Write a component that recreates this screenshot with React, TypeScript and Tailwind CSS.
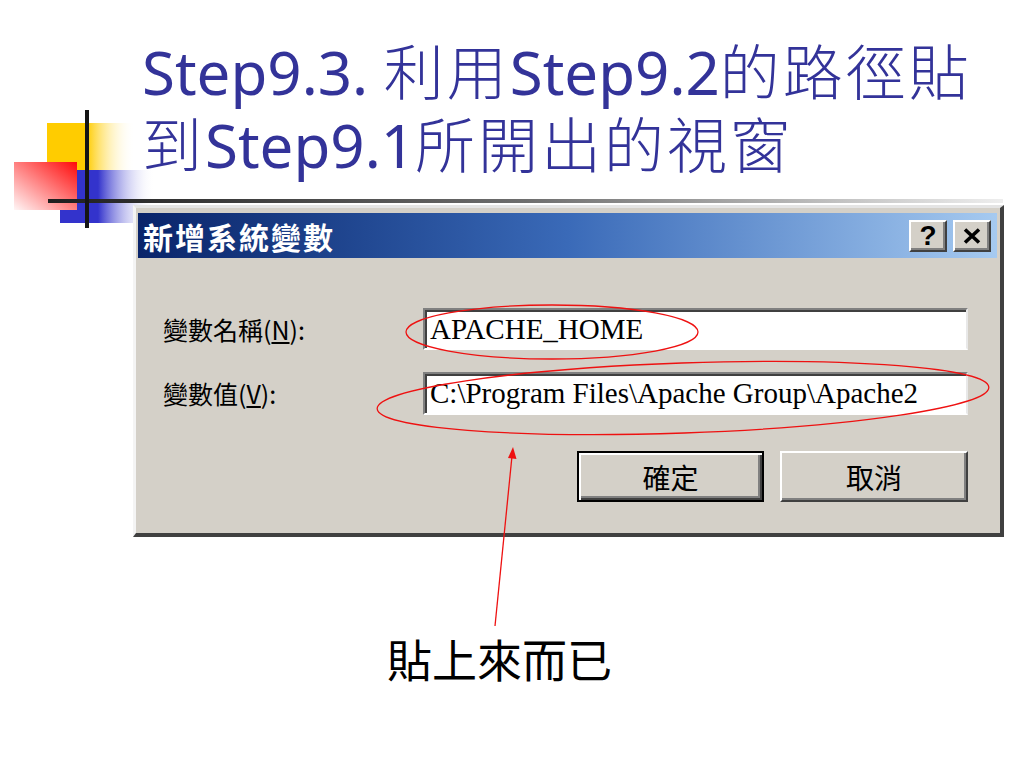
export default function App() {
  const cjk = '"Noto Sans CJK TC", "Noto Sans CJK SC", sans-serif';
  return (
    <div className="relative w-[1024px] h-[768px] overflow-hidden bg-white">
      {/* template logo decoration */}
      <svg
        className="absolute left-0 top-[100px]"
        width="1010"
        height="135"
        viewBox="0 100 1010 135"
      >
        <defs>
          <linearGradient id="yel" x1="0" y1="0" x2="1" y2="0">
            <stop offset="0" stopColor="#ffcc00" />
            <stop offset="0.45" stopColor="#ffcc00" />
            <stop offset="1" stopColor="#ffffff" stopOpacity="0" />
          </linearGradient>
          <linearGradient id="blu" x1="0" y1="0" x2="1" y2="0">
            <stop offset="0" stopColor="#3333cc" />
            <stop offset="0.4" stopColor="#3333cc" />
            <stop offset="1" stopColor="#ffffff" stopOpacity="0" />
          </linearGradient>
          <linearGradient id="red" x1="1" y1="0" x2="0" y2="1">
            <stop offset="0" stopColor="#ff0a0a" />
            <stop offset="0.5" stopColor="#ff8080" />
            <stop offset="1" stopColor="#fff6f6" />
          </linearGradient>
          <linearGradient id="gry" x1="0" y1="0" x2="1" y2="0">
            <stop offset="0" stopColor="#1e1e1e" />
            <stop offset="0.5" stopColor="#6e6e6e" />
            <stop offset="1" stopColor="#eeeeee" />
          </linearGradient>
        </defs>
        <rect x="47" y="123" width="88" height="47" fill="url(#yel)" />
        <rect x="60" y="170" width="95" height="53" fill="url(#blu)" />
        <rect x="14" y="162" width="63" height="48" fill="url(#red)" />
        <rect x="48" y="199" width="955" height="4" fill="url(#gry)" />
        <rect x="85" y="110" width="4" height="118" fill="#151515" />
      </svg>

      {/* slide title */}
      <div
        className="relative pt-[36px] pl-[142px] text-[60px] leading-[73px] text-[#333399] whitespace-nowrap"
        style={{ fontFamily: '"Noto Sans", "Noto Sans CJK TC", sans-serif' }}
      >
        Step9.3.&nbsp;<span className="tracking-[3px] font-light">利用</span>Step9.2
        <span className="tracking-[3px] font-light">的路徑貼</span>
        <br />
        <span className="tracking-[3px] font-light">到</span>Step9.1
        <span className="tracking-[3px] font-light">所開出的視窗</span>
      </div>

      {/* dialog screenshot */}
      <div className="relative mt-[23px] ml-[133px] w-[871px] h-[332px] flex flex-col bg-[#d4d0c8] border-t-[3px] border-l-[3px] border-r-[4px] border-b-[4px] border-t-[#e4e4e4] border-l-[#f4f4f4] border-r-[#404040] border-b-[#404040] pt-[5px] pl-[2px] pr-[3px]">
        {/* title bar */}
        <div className="h-[45px] flex items-center justify-between bg-linear-to-r from-[#0a246a] via-[#3a6ab8] to-[#a6caf0] pl-[5px] pr-[6px]">
          <span
            className="text-white text-[30px] font-bold tracking-[2px] leading-none"
            style={{ fontFamily: cjk }}
          >
            新增系統變數
          </span>
          <div className="flex gap-[6px]">
            <div
              className="w-[38px] h-[32px] flex items-center justify-center bg-[#d4d0c8] border-2 border-t-white border-l-white border-r-[#404040] border-b-[#404040] shadow-[inset_-2px_-2px_0_#808080] text-[28px] font-bold text-black leading-none"
              style={{ fontFamily: '"Liberation Sans", sans-serif' }}
            >
              ?
            </div>
            <div className="w-[38px] h-[32px] flex items-center justify-center bg-[#d4d0c8] border-2 border-t-white border-l-white border-r-[#404040] border-b-[#404040] shadow-[inset_-2px_-2px_0_#808080]">
              <svg width="18" height="16" viewBox="0 0 18 16">
                <path d="M2 1.5 L16 14.5 M16 1.5 L2 14.5" stroke="#000" strokeWidth="3.6" />
              </svg>
            </div>
          </div>
        </div>

        {/* body */}
        <div className="flex-1 flex flex-col pt-[50px] pl-[25px] pr-[29px]">
          <div className="flex items-center">
            <div className="w-[260px] text-[25px] text-black leading-none" style={{ fontFamily: cjk }}>
              變數名稱(<span className="underline">N</span>):
            </div>
            <div
              className="w-[545px] h-[42px] flex items-center bg-white border-2 border-t-[#808080] border-l-[#808080] border-b-white border-r-[#e8e8e8] shadow-[inset_2px_2px_0_#404040] pl-[5px] text-[29px] text-black leading-none"
              style={{ fontFamily: '"Liberation Serif", serif' }}
            >
              APACHE_HOME
            </div>
          </div>
          <div className="flex items-center mt-[22px]">
            <div className="w-[260px] text-[25px] text-black leading-none" style={{ fontFamily: cjk }}>
              變數值(<span className="underline">V</span>):
            </div>
            <div
              className="w-[545px] h-[43px] flex items-center bg-white border-2 border-t-[#808080] border-l-[#808080] border-b-white border-r-[#e8e8e8] shadow-[inset_2px_2px_0_#404040] pl-[5px] text-[29px] text-black leading-none whitespace-nowrap"
              style={{ fontFamily: '"Liberation Serif", serif' }}
            >
              C:\Program Files\Apache Group\Apache2
            </div>
          </div>
          <div className="flex justify-end gap-[16px] mt-[36px]">
            <div
              className="w-[187px] h-[51px] flex items-center justify-center border-2 border-black shadow-[inset_2px_2px_0_#ffffff,inset_-2px_-2px_0_#404040,inset_-4px_-4px_0_#808080] text-[28px] text-black leading-none"
              style={{ fontFamily: cjk }}
            >
              確定
            </div>
            <div
              className="w-[188px] h-[51px] flex items-center justify-center border-2 border-t-white border-l-white border-r-[#404040] border-b-[#404040] shadow-[inset_-2px_-2px_0_#808080] text-[28px] text-black leading-none"
              style={{ fontFamily: cjk }}
            >
              取消
            </div>
          </div>
        </div>
      </div>

      {/* caption */}
      <div className="mt-[99px] pl-[387px] text-[45px] leading-[45px] text-black" style={{ fontFamily: cjk }}>
        貼上來而已
      </div>

      {/* red annotations */}
      <svg className="absolute left-0 top-0 pointer-events-none" width="1024" height="768" viewBox="0 0 1024 768">
        <ellipse cx="552" cy="332" rx="146" ry="27" fill="none" stroke="#ee1111" strokeWidth="1.3" />
        <ellipse
          cx="683"
          cy="398"
          rx="306"
          ry="35"
          fill="none"
          stroke="#ee1111"
          strokeWidth="1.3"
          transform="rotate(-2 683 398)"
        />
        <line x1="495" y1="626" x2="512" y2="456" stroke="#ee1111" strokeWidth="1.3" />
        <polygon points="513,447 516.5,459 508,458" fill="#ee1111" />
      </svg>
    </div>
  );
}
